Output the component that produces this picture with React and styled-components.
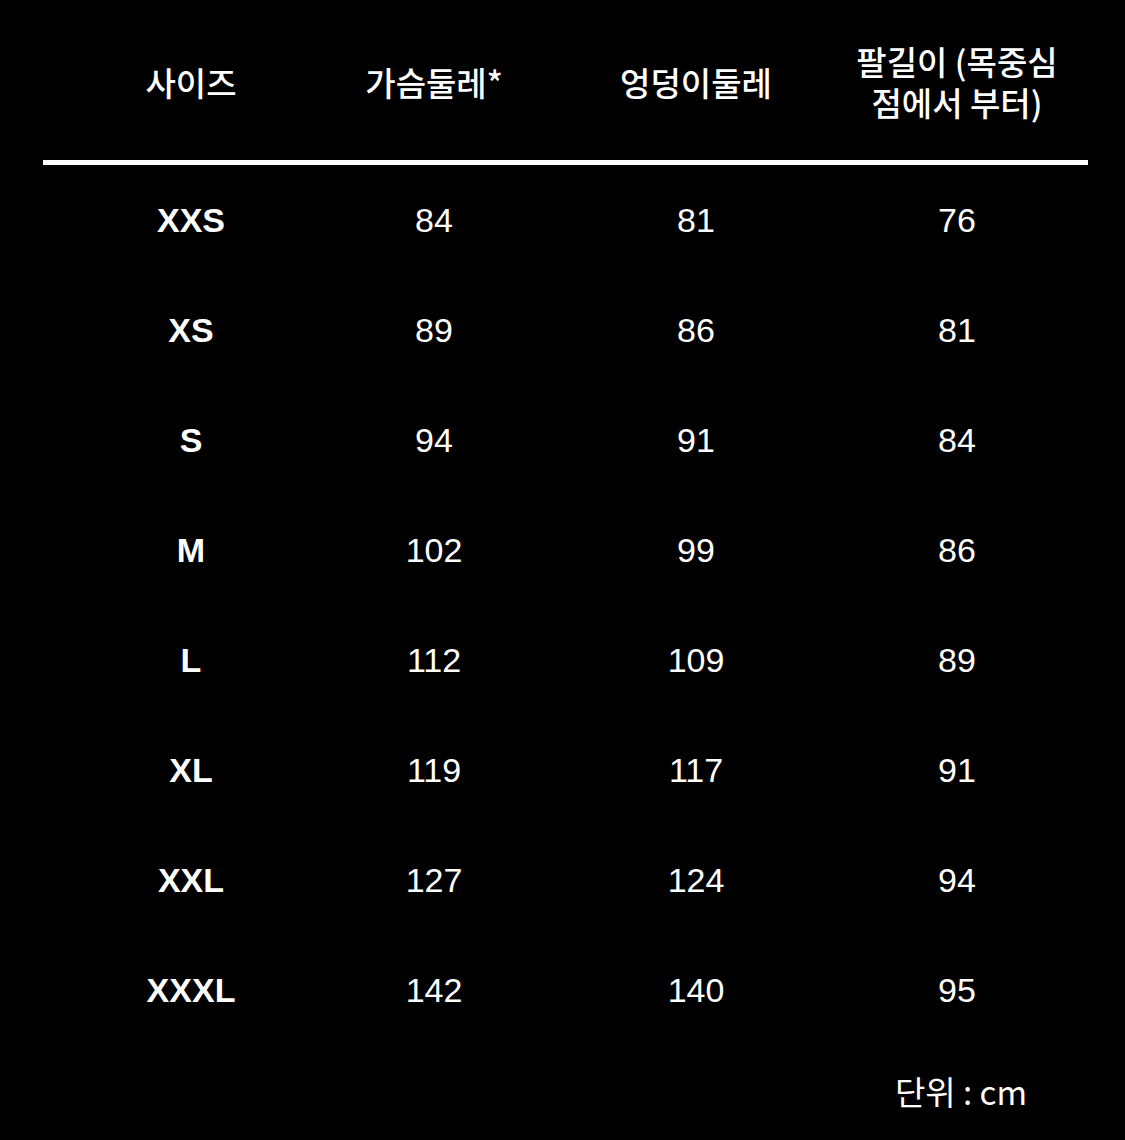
import React from 'react';
import styled, {createGlobalStyle} from 'styled-components';

const GlobalStyle = createGlobalStyle`
    html, body {
        margin: 0;
        padding: 0;
        background: #000;
    }
    body {
        font-family: "Liberation Sans", "Noto Sans CJK KR", sans-serif;
        color: #fff;
    }
`;

const Page = styled.div`
    width: 1125px;
    height: 1140px;
    background: #000;
    display: flex;
    flex-direction: column;
    overflow: hidden;
`;

const Table = styled.div`
    margin-left: 43px;
    width: 1008px;
    display: grid;
    grid-template-columns: 296px 190px 334px 188px;
`;

const HeadCell = styled.div`
    height: 152px;
    padding-top: 6px;
    display: flex;
    align-items: center;
    justify-content: center;
    text-align: center;
    font-family: "Noto Sans CJK KR", "Liberation Sans", sans-serif;
    font-size: 33px;
    font-weight: 500;
    line-height: 41px;
    white-space: nowrap;
`;

const Rule = styled.div`
    grid-column: 1 / -1;
    margin-right: -37px;
    margin-top: 2px;
    height: 5px;
    background: #fff;
`;

const Cell = styled.div`
    height: 110px;
    display: flex;
    align-items: center;
    justify-content: center;
    font-size: 34px;
    font-weight: ${p => (p.bold ? 700 : 400)};
`;

const Footer = styled.div`
    margin-top: 22px;
    padding-right: 98px;
    text-align: right;
    font-family: "Noto Sans CJK KR", "Liberation Sans", sans-serif;
    font-size: 33px;
    font-weight: 400;
`;

const headers = [
    ['사이즈'],
    ['가슴둘레*'],
    ['엉덩이둘레'],
    ['팔길이 (목중심', '점에서 부터)'],
];

const rows = [
    ['XXS', 84, 81, 76],
    ['XS', 89, 86, 81],
    ['S', 94, 91, 84],
    ['M', 102, 99, 86],
    ['L', 112, 109, 89],
    ['XL', 119, 117, 91],
    ['XXL', 127, 124, 94],
    ['XXXL', 142, 140, 95],
];

export default function App() {
    return (
        <>
            <GlobalStyle />
            <Page>
                <Table>
                    {headers.map((lines, i) => (
                        <HeadCell key={'h' + i}>
                            <div>
                                {lines.map((l, j) => (
                                    <div key={j}>{l}</div>
                                ))}
                            </div>
                        </HeadCell>
                    ))}
                    <Rule />
                    {rows.map((row) =>
                        row.map((val, j) => (
                            <Cell key={row[0] + j} bold={j === 0}>
                                {val}
                            </Cell>
                        ))
                    )}
                </Table>
                <Footer>단위 : cm</Footer>
            </Page>
        </>
    );
}
